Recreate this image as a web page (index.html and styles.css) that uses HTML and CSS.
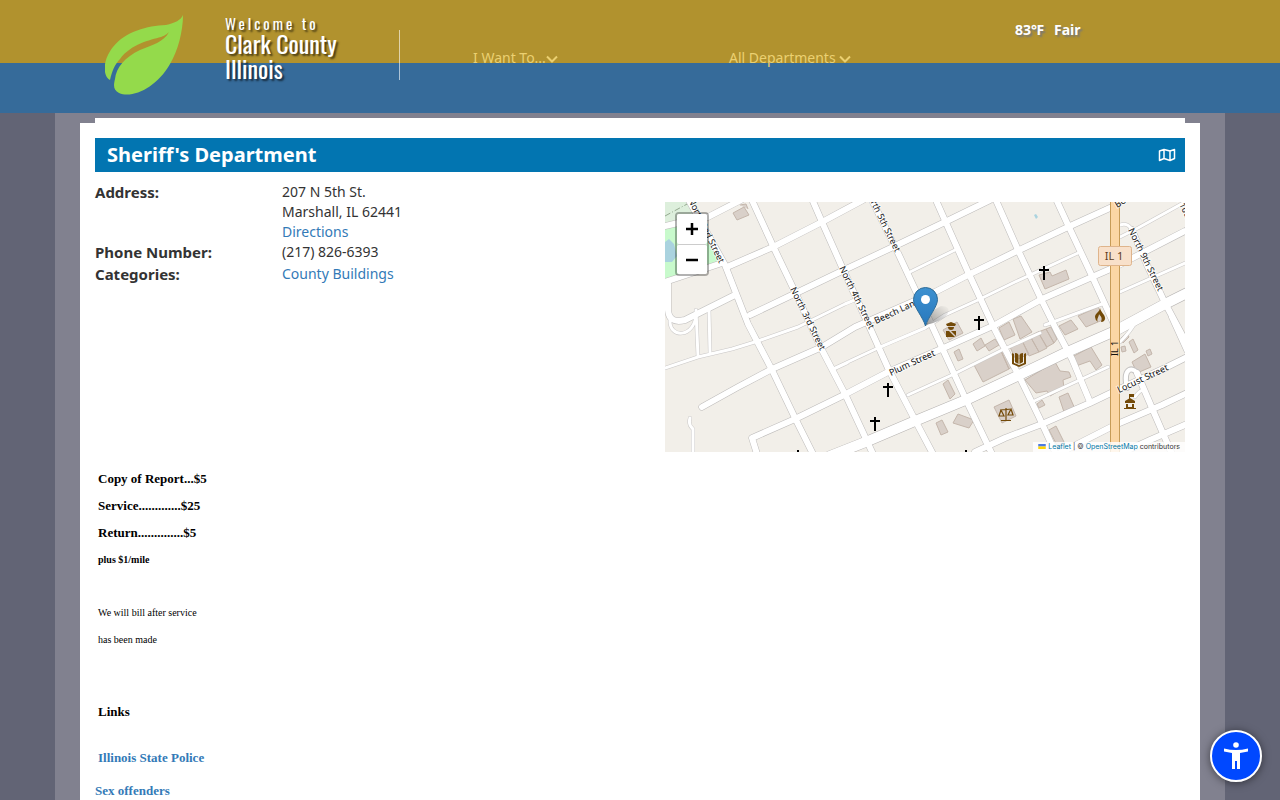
FILE: index.html
```html
<!DOCTYPE html>
<html lang="en">
<head>
<meta charset="utf-8">
<meta name="viewport" content="width=device-width, initial-scale=1">
<title>Sheriff's Department</title>
<link rel="stylesheet" href="styles.css">
</head>
<body>
<header class="site-header">
  <div class="header-inner">
    <a class="brand" href="#" aria-label="Clark County Illinois home">
      <svg class="leaf" viewBox="0 0 80 82" aria-hidden="true">
        <path fill="#94da4b" d="M78 0C76 5 70 8 61 10C42 11 21 16 8 32C0 42 -1 52 0 57C1 62 3 64 5 65C7 56 10 49 15 44C26 29 45 25 56 22C61 20 62 19 64 17C59 27 47 30 35 35C20 42 11 53 10 64C8 72 9 75 14 78C28 84 52 72 65 49C73 36 78 16 78 0Z"/>
      </svg>
      <span class="brand-text"><span class="welcome">Welcome to</span><span class="county">Clark County</span><span class="county">Illinois</span></span>
    </a>
    <nav class="main-nav">
      <button class="nav-item" type="button">I Want To...<svg viewBox="0 0 12 8" aria-hidden="true"><path d="M1 1.500L6 6.500L11 1.500"/></svg></button>
      <button class="nav-item" type="button">All Departments <svg viewBox="0 0 12 8" aria-hidden="true"><path d="M1 1.500L6 6.500L11 1.500"/></svg></button>
    </nav>
    <div class="weather"><span>83℉</span><span>Fair</span></div>
  </div>
</header>

<div class="page">
  <div class="strip"></div>
  <main class="content">
    <div class="title-bar">
      <h1>Sheriff's Department</h1>
      <a href="#map" aria-label="Show map"><svg viewBox="0 0 18 14" aria-hidden="true"><path d="M1.500 3L6 1.500L12 3L16.500 1.500V10.500L12 12.500L6 10.500L1.500 12.500ZM6 1.500V10.500M12 3V12.500"/></svg></a>
    </div>
    <div class="overview">
      <dl class="details">
        <dt>Address:</dt><dd>207 N 5th St.<br>Marshall, IL 62441<br><a href="#">Directions</a></dd>
        <dt>Phone Number:</dt><dd>(217) 826-6393</dd>
        <dt class="categories">Categories:</dt><dd class="categories"><a href="#">County Buildings</a></dd>
      </dl>
      <div class="map" id="map">
        <svg class="map-art" viewBox="0 0 520 250" preserveAspectRatio="xMidYMid slice" role="img" aria-label="Map of Marshall, Illinois">
          <defs>
            <linearGradient id="pin" x1="0" y1="0" x2="0" y2="1"><stop offset="0" stop-color="#3d91d0"/><stop offset="1" stop-color="#2878bd"/></linearGradient>
            <linearGradient id="shade" x1="0" y1="1" x2="1" y2="0"><stop offset="0" stop-color="#555" stop-opacity=".65"/><stop offset="1" stop-color="#777" stop-opacity="0"/></linearGradient>
            <path id="cross" d="M-1 -7H1V-4H5V-2H1V7H-1V-2H-5V-4H-1Z"/>
            <g id="thin">
              <path d="M245 70L290 48M0 166L33 155L67 147L93 139L133 125L180 102L192 97M170 166L213 146L260 126L280 113L313 98L350 80L413 51M243 193L287 173L337 148L375 131M33 155L31 108M45 151L44 107M28 250V227Q23 223 25 216M5 118C4 137 30 136 31 112M455 90L520 61M455 35L473 26L520 0M455 23Q463 20 467 28M380 123L437 102M367 200L443 165M455 140Q465 130 470 121M470 195Q475 187 480 188M167 168L182 161"/>
            </g>
            <g id="streets">
              <path d="M22 -5L60 63L83 122L107 168L131 218L148 252M86 -4L108 44L131 92L157 148L181 194L208 252M147 -3L157 20L177 65L205 126L223 166L250 218L268 252M203 -10L233 51L262 113L285 163L303 202L327 252M270 -4L282 23L303 70L330 128L354 174L374 215L391 252M330 -4L353 48L377 99L391 127L407 157L425 200M391 -3L403 23L427 74L448 120M467 28L483 65L500 101L522 142M507 115L522 148M472 171L490 213L507 252"/>
              <path d="M0 24L13 21L43 15L76 -2M62 65L108 45L157 20L198 -2M85 113L127 93L177 69L228 45L280 20L325 -2M37 205L73 185L107 167L157 145L190 125L215 114L270 90L303 73L350 50L403 25L447 5M92 252L87 236L130 217L177 194L223 170L283 144L330 123L377 97L427 75L450 65L520 29M310 250L340 236L377 222L425 201L450 189L500 166L522 155M395 251L450 223L497 203L522 191M450 254L485 238L522 222"/>
              <path d="M0 80L12 76L57 61M3 80V108Q4 122 20 118L70 93"/>
            </g>
            <path id="bend" d="M462 186C457 165 469 162 475 176"/>
            <path id="main" d="M165 254L203 239L250 219L303 197L350 175L400 151L450 129L500 102L524 90"/>
          </defs>
          <rect width="520" height="250" fill="#f2efe9"/>
          <path fill="#c8facc" d="M0 0H30L55 52V60L0 77Z"/>
          <path fill="#ddefdc" d="M0 0H25L32 12L0 23Z"/>
          <path fill="#aad3df" d="M0 40L4 37L9 42L12 54L7 60H0Z"/>
          <path d="M0 14L24 1" fill="none" stroke="#94a88f" stroke-dasharray="6 2 1 2"/>
          <path fill="#aad3df" d="M369 13L371 12L373 15L371 17Z"/>
          <g fill="#d9d0c9" stroke="#c4b6ab" stroke-width="1">
            <path d="M68 11L79 5L84 13L72 18ZM75 3L81 2L83 7"/>
            <path d="M374 73L385 70L387 74L401 68L404 77L380 87ZM278 128L292 120L298 131L284 138ZM289 150L294 147L298 157L293 159ZM308 142L316 136L320 144L312 149ZM320 143L330 137L334 143L324 149ZM309 163L336 149L344 167L318 180ZM336 149L341 148L349 163L344 167ZM278 182L283 178L290 192L285 197ZM271 221L277 218L283 230L276 233ZM293 212L309 218L304 226L288 221ZM329 205L344 198L351 214L337 221Z"/>
            <path d="M334 126L344 120L350 133L339 138ZM348 117L356 114L367 130L355 137ZM413 114L433 105L440 117L421 125ZM394 124L406 118L413 127L400 133ZM345 145L357 139L364 152L351 158ZM357 138L365 134L374 150L364 154ZM365 134L373 130L382 146L374 150ZM373 130L381 127L389 141L382 145ZM381 127L386 125L392 137L389 141ZM360 178L390 160L395 169L404 170L406 175L398 178L399 186L385 194L382 189L371 191ZM407 155L426 145L437 163L431 168L425 159L411 164ZM394 195L403 191L410 207L399 210ZM372 202L377 198L380 203L374 206ZM384 228L391 224L400 242L394 247ZM467 160L480 152L486 165L472 171ZM464 140L468 137L473 148L469 151ZM456 136L462 131L464 135L458 141ZM481 149L485 147L487 152L483 154ZM456 145L460 144L461 149L457 150Z"/>
          </g>
          <g fill="none" stroke-linecap="round" stroke-linejoin="round">
            <use href="#thin" stroke="#c9c7c6" stroke-width="4"/>
            <use href="#streets" stroke="#bdbbba" stroke-width="7"/>
            <use href="#bend" stroke="#c5c3c2" stroke-width="6"/>
            <use href="#main" stroke="#b5b2b0" stroke-width="11"/>
            <use href="#thin" stroke="#fff" stroke-width="3"/>
            <use href="#bend" stroke="#fff" stroke-width="4"/>
            <use href="#streets" stroke="#fff" stroke-width="6"/>
            <use href="#main" stroke="#fff" stroke-width="10"/>
          </g>
          <path d="M450 -2V252" stroke="#c79b57" stroke-width="10"/>
          <path d="M450 -2V252" stroke="#fcd6a4" stroke-width="8"/>
          <g class="street-labels">
            <text transform="translate(23 -2) rotate(64)">North 2nd Street</text>
            <text transform="translate(125 87) rotate(64)">North 3rd Street</text>
            <text transform="translate(174 66) rotate(64)">North 4th Street</text>
            <text transform="translate(200 -11) rotate(64)">North 5th Street</text>
            <text transform="translate(463 28) rotate(64)">North 9th Street</text>
            <text transform="translate(502 -22) rotate(64)">North 10th Street</text>
            <text transform="translate(211 122) rotate(-25)">Beech Lane</text>
            <text transform="translate(226 174) rotate(-25)">Plum Street</text>
            <text transform="translate(454 191) rotate(-25)">Locust Street</text>
            <text class="route" transform="translate(453 154) rotate(-90)">IL 1</text>
            <text transform="translate(452 6) rotate(-30)">Bo</text>
          </g>
          <rect x="433.500" y="44.500" width="33" height="19" rx="2" fill="#f8e0ca" stroke="#dfb48b"/>
          <text class="shield" x="449" y="58" text-anchor="middle">IL 1</text>
          <use href="#cross" x="379" y="71"/><use href="#cross" x="314" y="121"/><use href="#cross" x="223" y="188"/><use href="#cross" x="210" y="222"/><use href="#cross" x="133" y="255"/><use href="#cross" x="301" y="255"/>
          <g fill="#734a08">
            <path d="M281 122L286 120L291 122L290 124H282ZM283 125H289Q289 128 286 128Q283 128 283 125ZM281 129H284L290 135H281ZM286 129H291V134Z"/>
            <path d="M347 151L349 152V161L354 163L359 161V152L361 151V162L354 165L347 162ZM350 151Q353 151 353.500 153V162L350 160ZM358 151Q355 151 354.500 153V162L358 160Z"/>
            <path d="M435 106C436 111 440 112 440 116Q440 120 436 120C438 115 435 114 434 112C434 115 431 117 433 120Q430 118 430 115C430 111 435 110 435 106Z"/>
            <path d="M460 199L465 196L470 199V201H460ZM461 202H463V205H467V202H469V206H471V207H459V206H461ZM464 192H469V195H465V197H464Z"/>
          </g>
          <path d="M341 206V218M336 218.500H346M335 208L347 207M336 208L334 214H339L336 208M346 207L343 213H348L346 207" fill="none" stroke="#734a08" stroke-width="1.200"/>
          <path d="M261 123Q265 108 276 104Q287 104 282 113Q275 120 261 123Z" fill="url(#shade)"/>
          <path d="M260.500 124C258 115 248.500 105 248.500 97.500A12 12 0 0 1 272.500 97.500C272.500 105 263 115 260.500 124Z" fill="url(#pin)" stroke="#2e6c97"/>
          <circle cx="260.500" cy="97.500" r="4.500" fill="#fff"/>
        </svg>
        <div class="zoom-control"><button type="button" aria-label="Zoom in"><svg viewBox="0 0 12 12" aria-hidden="true"><path d="M0 6H12M6 0V12"/></svg></button><button type="button" aria-label="Zoom out"><svg viewBox="0 0 12 12" aria-hidden="true"><path d="M0 6H12"/></svg></button></div>
        <div class="attribution"><a href="#"><svg viewBox="0 0 12 8" aria-hidden="true"><path fill="#4c7be1" d="M0 0H12V4H0Z"/><path fill="#ffd500" d="M0 4H12V8H0Z"/></svg> Leaflet</a> | © <a href="#">OpenStreetMap</a> contributors</div>
      </div>
    </div>
    <section class="notes">
      <p class="fee">Copy of Report...$5</p>
      <p class="fee">Service.............$25</p>
      <p class="fee">Return..............$5</p>
      <p class="fee fee-small">plus $1/mile</p>
      <div class="billing"><p>We will bill after service</p><p>has been made</p></div>
      <h2>Links</h2>
      <p class="link-row"><a href="#">Illinois State Police</a></p>
    </section>
    <p class="offenders"><a href="#">Sex offenders</a></p>
  </main>
</div>
<button class="accessibility" type="button" aria-label="Accessibility options">
  <svg viewBox="0 0 24 28" aria-hidden="true"><circle cx="12" cy="3" r="2.800"/><path d="M0 6.500Q12 9.500 24 6.500V9.500L16 11V27H13V19H11V27H8V11L0 9.500Z"/></svg>
</button>
</body>
</html>
```
FILE: styles.css
```css
* { box-sizing: border-box; }
body {
  margin: 0;
  background: #626475;
  color: #333;
  font: 14px/20px "Noto Sans", "Open Sans", sans-serif;
}
a { color: #337ab7; text-decoration: none; }
button { font: inherit; cursor: pointer; }
h1, h2, p, dl, dd { margin: 0; }

.site-header {
  height: 113px;
  background: linear-gradient(#b1922e 63px, #366b9a 63px);
}
.header-inner {
  display: flex;
  max-width: 1170px;
  margin: 0 auto;
  padding: 15px 50px 0;
}
.brand {
  display: flex;
  gap: 40px;
  color: #fff;
}
.leaf { width: 80px; height: 82px; }
.brand-text {
  display: flex;
  flex-direction: column;
  width: 174px;
  font-family: Oswald, "Liberation Sans Narrow", "Roboto Condensed", "Open Sans Condensed", "Liberation Sans", sans-serif;
  text-shadow: 2px 2px 2px rgba(0, 0, 0, .6);
}
.welcome { font-size: 15px; line-height: 16px; letter-spacing: 3px; }
.county { font-size: 24px; line-height: 25px; white-space: nowrap; }
.main-nav {
  display: flex;
  align-items: flex-start;
  height: 50px;
  margin-top: 15px;
  padding-left: 73px;
  border-left: 1px solid rgba(255, 255, 255, .6);
}
.nav-item {
  width: 256px;
  margin-top: 18px;
  padding: 0;
  border: 0;
  background: none;
  color: #ebd071;
  line-height: 20px;
  text-align: left;
  white-space: pre;
}
.nav-item svg { width: 12px; height: 8px; fill: none; stroke: currentColor; stroke-width: 2; }
.weather {
  display: flex;
  gap: 10px;
  margin-left: 30px;
  padding-top: 5px;
  color: #fff;
  font-weight: 700;
  text-shadow: 2px 2px 2px #777;
  white-space: nowrap;
}

.page {
  max-width: 1170px;
  min-height: calc(100vh - 113px);
  margin: 0 auto;
  padding: 5px 25px 0;
  background: #81818f;
}
.strip { height: 5px; margin: 0 15px; background: #fff; }
.content { min-height: 680px; padding: 15px; background: #fff; }
.title-bar {
  display: flex;
  align-items: center;
  justify-content: space-between;
  height: 34px;
  padding: 0 9px 0 12px;
  background: #0275b1;
  color: #fff;
}
.title-bar h1 { font-size: 20px; line-height: 34px; }
.title-bar a { display: flex; }
.title-bar svg { width: 18px; height: 14px; fill: none; stroke: #fff; stroke-width: 1.5; stroke-linejoin: round; }
.overview { display: flex; justify-content: space-between; gap: 20px; padding-top: 10px; }
.details {
  display: grid;
  flex: 1;
  grid-template-columns: 187px 1fr;
  align-content: start;
}
.details dt { font-size: 15px; font-weight: 700; line-height: 21px; }
.details .categories { padding-top: 1px; }
.map {
  position: relative;
  flex: 0 1 520px;
  height: 250px;
  margin-top: 20px;
  overflow: hidden;
}
.map-art { display: block; width: 100%; height: 100%; }
.street-labels {
  fill: #111;
  stroke: rgba(255, 255, 255, .6);
  stroke-width: 2px;
  paint-order: stroke;
  font: 9px "Noto Sans", sans-serif;
}
.route { stroke: none; }
.shield { fill: #5c3c20; font: 11px "Noto Sans", sans-serif; }
.zoom-control {
  position: absolute;
  top: 10px;
  left: 10px;
  border: 2px solid rgba(0, 0, 0, .3);
  border-radius: 4px;
}
.zoom-control button {
  display: flex;
  align-items: center;
  justify-content: center;
  width: 30px;
  height: 30px;
  padding: 0;
  border: 0;
  border-radius: 2px;
  background: #fff;
}
.zoom-control button + button { border-top: 1px solid #ccc; }
.zoom-control svg { width: 12px; height: 12px; fill: none; stroke: #000; stroke-width: 2.5; }
.attribution {
  position: absolute;
  right: 0;
  bottom: 0;
  padding: 0 5px;
  background: rgba(255, 255, 255, .8);
  font: 7px/10px Inter, "Liberation Sans", sans-serif;
  white-space: nowrap;
}
.attribution a { color: #0078a8; }
.attribution svg { width: 8px; height: 5px; }

.notes {
  padding: 13px 3px 0;
  color: #000;
  font-family: "Liberation Serif", serif;
}
.fee { font-size: 13px; font-weight: 700; line-height: 27px; }
.fee-small { font-size: 10px; }
.billing { padding-top: 26px; font-size: 10px; line-height: 27px; }
.notes h2 { padding-top: 45px; font-size: 13px; line-height: 28px; }
.link-row { padding-top: 18px; font-size: 13px; font-weight: 700; line-height: 28px; }
.offenders {
  padding-top: 9px;
  font: 700 13px/20px "Liberation Serif", serif;
}
.accessibility {
  position: fixed;
  right: 18px;
  bottom: 18px;
  display: flex;
  align-items: center;
  justify-content: center;
  width: 52px;
  height: 52px;
  padding: 0;
  border: 2px solid #fff;
  border-radius: 50%;
  background: #0048ff;
  box-shadow: 0 1px 8px rgba(0, 0, 0, .5);
}
.accessibility svg { width: 24px; height: 28px; fill: #fff; }
```
